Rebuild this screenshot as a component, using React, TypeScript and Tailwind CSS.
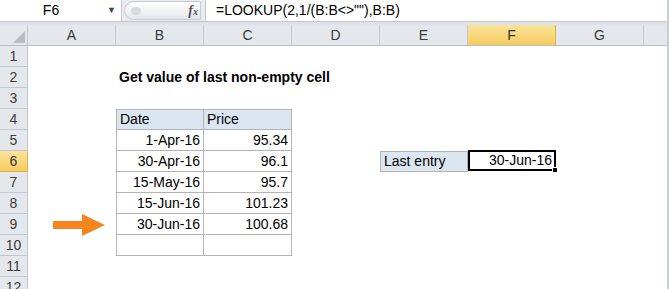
import React from "react";

type CellSpec = {
  text?: string;
  align?: "left" | "right";
  bold?: boolean;
  cls?: string;
  arrow?: boolean;
  selected?: boolean;
};

const COLS = ["A", "B", "C", "D", "E", "F", "G"];
const ROWS = [1, 2, 3, 4, 5, 6, 7, 8, 9, 10, 11, 12];

// light table borders
const tb = "border-r border-b border-[#b3b3b3]";
const head = "bg-[#dce6f1]";

const tableRows: [string, string][] = [
  ["1-Apr-16", "95.34"],
  ["30-Apr-16", "96.1"],
  ["15-May-16", "95.7"],
  ["15-Jun-16", "101.23"],
  ["30-Jun-16", "100.68"],
  ["", ""],
];

function buildSheet() {
  const sheet: Record<number, Record<string, CellSpec>> = {
    2: { B: { text: "Get value of last non-empty cell", bold: true } },
    4: {
      B: { text: "Date", cls: `${tb} ${head} border-t border-l` },
      C: { text: "Price", cls: `${tb} ${head} border-t` },
    },
  };
  tableRows.forEach(([date, price], i) => {
    const r = 5 + i;
    sheet[r] = {
      ...(sheet[r] || {}),
      B: { text: date, align: "right", cls: `${tb} border-l` },
      C: { text: price, align: "right", cls: tb },
    };
  });
  sheet[6].E = { text: "Last entry", cls: `${head} border border-[#b3b3b3]` };
  sheet[6].F = { text: "30-Jun-16", align: "right", selected: true };
  sheet[9].A = { arrow: true };
  return sheet;
}

const sheet = buildSheet();

function Arrow() {
  return (
    <svg width="52" height="22" viewBox="0 0 52 22" className="absolute left-[25px] top-0">
      <rect x="0" y="7" width="32" height="8" rx="1" fill="#f5861f" />
      <polygon points="29,0 52,11 29,22" fill="#f5861f" />
    </svg>
  );
}

function Cell({ spec }: { spec?: CellSpec }) {
  if (spec?.selected) {
    return (
      <div className="relative w-[88px] h-[21px] shrink-0 -my-px border-2 border-black flex items-center justify-end pr-[2px] text-[14px] text-black bg-white z-10">
        {spec.text}
        <span className="absolute -right-[4px] -bottom-[4px] w-[6px] h-[6px] bg-black border border-white" />
      </div>
    );
  }
  return (
    <div
      className={`relative w-[88px] h-[21px] shrink-0 flex items-center whitespace-nowrap text-[14px] text-black ${
        spec?.align === "right" ? "justify-end pr-[3px]" : "justify-start pl-[3px]"
      } ${spec?.bold ? "font-bold" : ""} ${spec?.cls ?? ""}`}
    >
      {spec?.arrow && <Arrow />}
      {spec?.text}
    </div>
  );
}

export default function App() {
  return (
    <div className="w-[669px] h-[289px] overflow-hidden bg-white font-['Liberation_Sans',Arial,sans-serif] border-r-2 border-[#c9ccd1]">
      {/* Formula bar */}
      <div className="flex h-[22px] bg-[#e9ecf0] border-b border-[#c3c7cd]">
        <div className="flex w-[122px] bg-white border-r border-[#c3c7cd] items-center">
          <span className="flex-1 text-center text-[14px] text-black">F6</span>
          <span className="w-[19px] text-[9px] text-[#444] text-center">▼</span>
        </div>
        <div className="w-[83px] flex items-center pl-[2px] pr-[4px]">
          <div className="flex-1 h-[19px] rounded-l-full border border-[#c7cbd1] bg-gradient-to-b from-white to-[#e4e7eb] flex items-center justify-between pl-[6px] pr-[2px]">
            <span className="w-[10px] h-[8px] rounded-full bg-[#d9dce0]" />
            <span className="font-['Liberation_Serif',serif] italic font-bold text-[14px] text-[#555]">
              f<span className="text-[10px]">x</span>
            </span>
          </div>
        </div>
        <div className="flex-1 bg-white border-l border-[#c3c7cd] flex items-center pl-[10px] text-[14px] text-black">
          {'=LOOKUP(2,1/(B:B<>""),B:B)'}
        </div>
      </div>
      <div className="h-[3px] bg-[#dfe3e8]" />

      {/* Column headers */}
      <div className="flex h-[21px] bg-[#e4e8ed] border-b border-[#b9bec5]">
        <div className="relative w-[28px] shrink-0 border-r border-[#c3c8ce]">
          <span className="absolute right-[2px] bottom-[2px] w-0 h-0 border-l-[12px] border-l-transparent border-b-[12px] border-b-[#b9bdc3]" />
        </div>
        {COLS.map((c) => (
          <div
            key={c}
            className={`w-[88px] shrink-0 flex items-center justify-center text-[14px] border-r ${
              c === "F"
                ? "bg-gradient-to-b from-[#fbe39a] to-[#f6cc5c] text-[#333] border-[#e2b04a]"
                : "text-[#3c3c3c] border-[#c3c8ce]"
            }`}
          >
            {c}
          </div>
        ))}
        <div className="flex-1" />
      </div>

      {/* Rows */}
      {ROWS.map((r) => (
        <div key={r} className="flex h-[21px]">
          <div
            className={`w-[28px] shrink-0 flex items-center justify-center text-[14px] border-r border-b ${
              r === 6
                ? "bg-gradient-to-b from-[#fbe39a] to-[#f6cc5c] text-[#333] border-[#e2b04a]"
                : "bg-[#e4e8ed] text-[#3c3c3c] border-[#c3c8ce]"
            }`}
          >
            {r}
          </div>
          {COLS.map((c) => (
            <Cell key={c} spec={sheet[r]?.[c]} />
          ))}
        </div>
      ))}
    </div>
  );
}
